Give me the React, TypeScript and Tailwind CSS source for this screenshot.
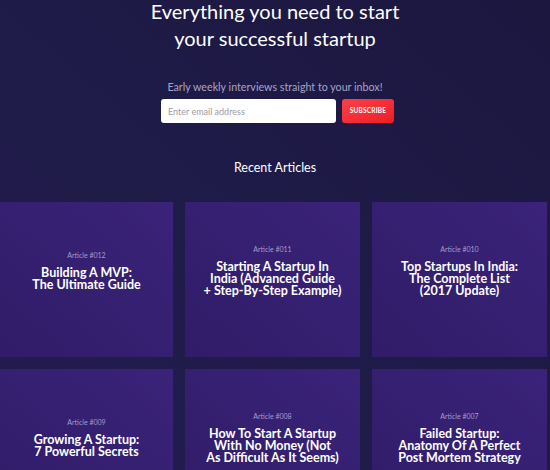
import React from 'react';

interface Article {
  id: string;
  title: string;
}

const articles: Article[] = [
  { id: '012', title: 'Building A MVP:\nThe Ultimate Guide' },
  { id: '011', title: 'Starting A Startup In\nIndia (Advanced Guide\n+ Step-By-Step Example)' },
  { id: '010', title: 'Top Startups In India:\nThe Complete List\n(2017 Update)' },
  { id: '009', title: 'Growing A Startup:\n7 Powerful Secrets' },
  { id: '008', title: 'How To Start A Startup\nWith No Money (Not\nAs Difficult As It Seems)' },
  { id: '007', title: 'Failed Startup:\nAnatomy Of A Perfect\nPost Mortem Strategy' },
];

const ArticleCard: React.FC<{ article: Article }> = ({ article }) => (
  <div className="h-[155px] bg-gradient-to-bl from-[#3a2379] to-[#301c68] flex flex-col items-center justify-center pb-[17px] text-center">
    <span className="text-[7px] leading-[8px] text-[#a59dcc]">Article #{article.id}</span>
    <h3 className="mt-[8px] text-[12.5px] leading-[12px] font-bold text-white whitespace-pre-line">{article.title}</h3>
  </div>
);

const App: React.FC = () => {
  return (
    <div className="w-[550px] h-[470px] overflow-hidden bg-gradient-to-bl from-[#1b173f] via-[#1f1b48] to-[#221d4e] font-['Lato',sans-serif]">
      <div className="flex flex-col items-center">
        <h1 className="-mt-[2px] text-[20px] leading-[27px] text-white text-center">
          Everything you need to start
          <br />
          your successful startup
        </h1>

        <p className="mt-[28px] text-[10.7px] leading-[14px] text-[#a8a3ca]">Early weekly interviews straight to your inbox!</p>

        <div className="mt-[5px] ml-[5px] flex gap-[6px]">
          <input
            type="email"
            placeholder="Enter email address"
            className="w-[175px] h-[24px] rounded-[3px] bg-white px-[7px] text-[9px] text-gray-700 placeholder:text-[#9e9aa8] outline-none"
          />
          <button className="w-[52px] h-[24px] rounded-[3px] bg-gradient-to-br from-[#fb3f47] to-[#ec1b25] text-[6.5px] font-bold text-white tracking-[0.2px]">
            SUBSCRIBE
          </button>
        </div>

        <h2 className="mt-[38px] text-[12.5px] leading-[14px] text-white">Recent Articles</h2>
      </div>

      <div className="mt-[27px] grid grid-cols-[173px_175px_175px] gap-x-[12px] gap-y-[12px]">
        {articles.map(a => (
          <ArticleCard key={a.id} article={a} />
        ))}
      </div>
    </div>
  );
};

export default App;
